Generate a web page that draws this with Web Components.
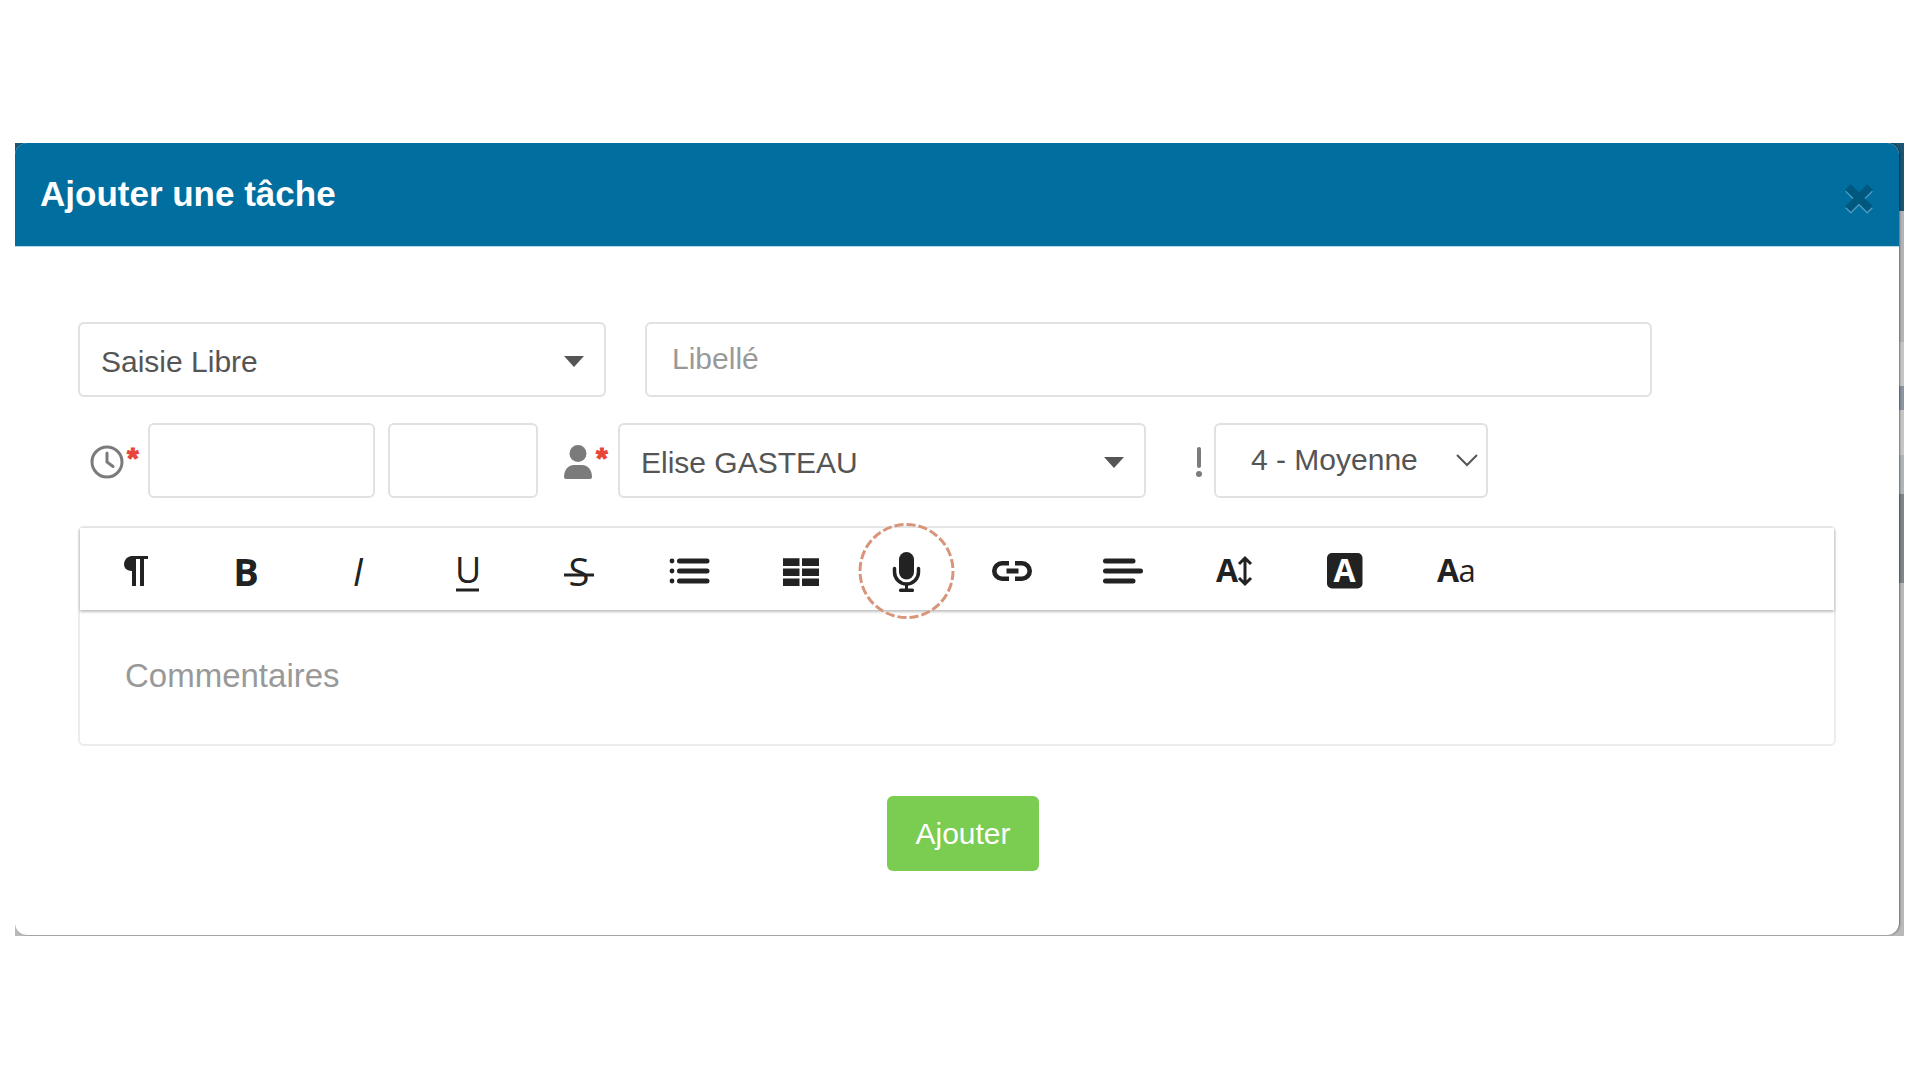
<!DOCTYPE html>
<html lang="fr">
<head>
<meta charset="utf-8">
<meta name="viewport" content="width=device-width, initial-scale=1">
<title>Ajouter une tâche</title>
<style>
    body {
        margin: 0;
        background: #fff;
        color: #555;
        font-family: "Liberation Sans", Arial, sans-serif;
        font-size: 30px;
    }
</style>
</head>
<body>
<task-modal heading="Ajouter une tâche">
    <form-row class="first">
        <select-field label="Type de tâche" value="Saisie Libre" class="third"></select-field>
        <text-field label="Libellé" placeholder="Libellé" class="grow"></text-field>
    </form-row>
    <form-row class="second">
        <field-icon name="clock" required></field-icon>
        <text-field label="Date" class="date"></text-field>
        <text-field label="Heure" class="time"></text-field>
        <field-icon name="user" required class="wide"></field-icon>
        <select-field label="Responsable" value="Elise GASTEAU" class="grow"></select-field>
        <field-icon name="priority" class="narrow"></field-icon>
        <select-field label="Priorité" value="4 - Moyenne" arrow="chevron" class="priority"></select-field>
    </form-row>
    <text-editor placeholder="Commentaires"></text-editor>
    <submit-button slot="footer">Ajouter</submit-button>
</task-modal>

<script>
const ICONS = {
    paragraph: `<path d="M17 5h16v3h-4v27h-4V8h-4v27h-4V20C5 20 8 5 17 5z"/>`,
    bold: `<text x="20" y="35" font-size="38" font-weight="700">B</text>`,
    italic: `<text x="21" y="35" font-size="38" font-style="italic">I</text>`,
    underline: `<text x="20" y="32" font-size="36">U</text><path d="M8 37.500h23v3H8z"/>`,
    strike: `<text x="20" y="35" font-size="38">S</text><path d="M5 22.500h30v3H5z"/>`,
    list: `<g fill="none" stroke="currentColor" stroke-width="5" stroke-linecap="round">
            <path d="M9.500 10H37M9.500 20H37M9.500 30H37"/></g>
            <circle cx="2" cy="10" r="2.400"/><circle cx="2" cy="20" r="2.400"/><circle cx="2" cy="30" r="2.400"/>`,
    table: `<path d="M2 7.300h16.500V15H2zM21 7.300h17V15H21zM2 17.500h16.500v7.600H2zM21 17.500h17v7.600H21zM2 27.500h16.500v7.600H2zM21 27.500h17v7.600H21z"/>`,
    mic: `<circle cx="19.500" cy="20" r="46.500" fill="none" stroke="#d9957a" stroke-width="3" pathLength="288" stroke-dasharray="9 3"/>
            <rect x="12" y="1" width="15" height="27.500" rx="7.500"/>
            <path d="M7.500 17.500v3.500a12 12 0 0 0 24 0v-3.500" fill="none" stroke="currentColor" stroke-width="3.500" stroke-linecap="round"/>
            <path d="M18 33h3v5h-3z"/><rect x="12" y="37.500" width="15" height="3.500" rx="1.500"/>`,
    link: `<path d="M16 12.300H9a7.700 7.700 0 0 0 0 15.400h7M22 12.300h7a7.700 7.700 0 0 1 0 15.400h-7" fill="none" stroke="currentColor" stroke-width="4.600"/>
            <path d="M13.500 17.500h12v5h-12z"/>`,
    align: `<path d="M1.500 10H29M1.500 20H36.500M1.500 30H29" fill="none" stroke="currentColor" stroke-width="5" stroke-linecap="round"/>`,
    size: `<text x="12" y="31" font-size="32" font-weight="700">A</text>
            <path d="M30 7v26M24 13l6-6 6 6M24 27l6 6 6-6" fill="none" stroke="currentColor" stroke-width="3"/>`,
    color: `<rect x="1" y="2" width="35.500" height="35.500" rx="5"/>
            <text x="18.500" y="31" font-size="32" font-weight="700" fill="#fff">A</text>`,
    font: `<text x="11" y="31" font-size="32" font-weight="700">A</text>
            <text x="30" y="31" font-size="31" font-weight="500">a</text>`
};

const TOOLS = [
    ["paragraph", "Format du paragraphe"],
    ["bold", "Gras"],
    ["italic", "Italique"],
    ["underline", "Souligné"],
    ["strike", "Barré"],
    ["list", "Liste"],
    ["table", "Tableau"],
    ["mic", "Dictée"],
    ["link", "Lien"],
    ["align", "Alignement"],
    ["size", "Taille"],
    ["color", "Couleur"],
    ["font", "Police"]
];

class BaseElement extends HTMLElement
{
    constructor(){
        super();
        this.attachShadow({mode:"open"});
    }

    connectedCallback(){
        const template = document.createElement("template");
        template.innerHTML = `<style>* { box-sizing: border-box; }${this.getStyles()}</style>${this.getTemplate()}`;
        this.shadowRoot.replaceChildren(template.content.cloneNode(true));
    }
}

class TaskModal extends BaseElement
{
    getTemplate(){
        return `
        <section class="modal" role="dialog" aria-labelledby="title">
            <header class="modal__header">
                <h1 class="modal__title" id="title">${this.getAttribute("heading")}</h1>
                <button class="modal__close" type="button" aria-label="Fermer">
                    <svg width="30" height="32" viewBox="0 0 30 32" fill="none" stroke-width="8">
                        <path d="M4 6l22 22M26 6L4 28" stroke="#4d9bc0"/>
                        <path d="M4 4l22 22M26 4L4 26" stroke="#00587f"/>
                    </svg>
                </button>
            </header>
            <form class="modal__body">
                <slot></slot>
                <footer class="modal__footer"><slot name="footer"></slot></footer>
            </form>
        </section>
        `;
    }

    getStyles(){
        // the slice of the page behind stays visible along the right edge
        return `
            :host {
                display: block;
                margin: 143px 16px 0 15px;
                padding: 0 5px 1px 0;
                background: linear-gradient(#1b5573 0 68px, #b4b4b7 68px 199px, #c6c6c6 199px 243px,
                    #8b95a3 243px 267px, #c6c6c6 267px 312px, #b0b5b7 312px 351px, #7f8588 351px 440px, #b9b9b9 440px);
            }
            .modal {
                border-radius: 12px;
                background: #fff;
                box-shadow: 1px 0 2px rgba(0, 0, 0, .4);
                clip-path: inset(0 -5px -1px 0);
            }
            .modal__header {
                display: flex;
                justify-content: space-between;
                align-items: flex-start;
                padding: 31px 25px 31px;
                border-bottom: 1px solid #b5dcec;
                border-radius: 12px 12px 0 0;
                background: #006e9f;
            }
            .modal__title {
                margin: 0;
                color: #fff;
                font-size: 35px;
                line-height: 40px;
            }
            .modal__close {
                display: flex;
                padding: 9px 0 0;
                border: 0;
                background: none;
            }
            .modal__body {
                padding: 75px 63px 64px;
            }
            .modal__footer {
                display: flex;
                justify-content: center;
                padding: 50px 0 0 12px;
            }
        `;
    }
}

class FormRow extends BaseElement
{
    getTemplate(){
        return `<slot></slot>`;
    }

    getStyles(){
        return `
            :host {
                display: flex;
                height: 75px;
            }
            :host(.first) {
                gap: 39px;
                margin-bottom: 26px;
                padding-right: 184px;
            }
            :host(.second) {
                margin-bottom: 28px;
                padding-right: 348px;
            }
            ::slotted(.third) { flex: 0 0 528px; }
            ::slotted(.grow) { flex: 1; }
            ::slotted(.date) { flex: 0 0 227px; margin-right: 13px; }
            ::slotted(.time) { flex: 0 0 150px; }
            ::slotted(.priority) { flex: 0 0 274px; }
        `;
    }
}

class TextField extends BaseElement
{
    getTemplate(){
        return `<input type="text" aria-label="${this.getAttribute("label")}" placeholder="${this.getAttribute("placeholder") || ""}">`;
    }

    getStyles(){
        return `
            :host { display: block; min-width: 0; }
            input {
                display: block;
                width: 100%;
                height: 75px;
                padding: 0 25px 2px;
                border: 2px solid #e1e1e1;
                border-radius: 6px;
                background: #fff;
                color: inherit;
                font: inherit;
            }
            input::placeholder { color: #999; opacity: 1; }
        `;
    }
}

class SelectField extends BaseElement
{
    getTemplate(){
        const chevron = this.getAttribute("arrow") === "chevron";
        return `
        <select class="${chevron ? "chevron" : "caret"}" aria-label="${this.getAttribute("label")}">
            <option>${this.getAttribute("value")}</option>
        </select>
        ${chevron
            ? `<svg class="arrow arrow--chevron" width="22" height="14" viewBox="0 0 22 14"><path d="M1 1l10 10L21 1" fill="none" stroke="#555" stroke-width="2"/></svg>`
            : `<svg class="arrow" width="20" height="11" viewBox="0 0 20 11"><path d="M0 0h20L10 11z" fill="#555"/></svg>`}
        `;
    }

    getStyles(){
        return `
            :host {
                display: grid;
                align-items: center;
                min-width: 0;
            }
            select, .arrow { grid-area: 1 / 1; }
            select {
                appearance: none;
                width: 100%;
                height: 75px;
                padding: 3px 50px 0 21px;
                border: 2px solid #e1e1e1;
                border-radius: 6px;
                background: #fff;
                color: inherit;
                font: inherit;
            }
            select.chevron { padding: 0 30px 2px 35px; }
            .arrow {
                justify-self: end;
                margin: 4px 22px 0 0;
                pointer-events: none;
            }
            .arrow--chevron { margin: 0 10px 0 0; }
        `;
    }
}

class FieldIcon extends BaseElement
{
    getTemplate(){
        const shapes = {
            clock: `<svg width="34" height="34" viewBox="0 0 34 34" fill="none" stroke="currentColor" stroke-width="3" stroke-linecap="round">
                    <circle cx="17" cy="17" r="15"/><path d="M17 8v9l6 4.500"/></svg>`,
            user: `<svg width="30" height="34" viewBox="0 0 30 34" fill="currentColor">
                    <circle cx="15" cy="8.500" r="8.500"/><path d="M1 32c0-8 5-12 10-12h8c5 0 10 4 10 12q0 2-2 2H3q-2 0-2-2z"/></svg>`,
            priority: `<svg width="6" height="30" viewBox="0 0 6 30" fill="currentColor">
                    <rect x="1" y="0" width="4" height="21" rx="2"/><circle cx="3" cy="27" r="3"/></svg>`
        };
        return `${shapes[this.getAttribute("name")]}${this.hasAttribute("required") ? "<span>*</span>" : ""}`;
    }

    getStyles(){
        return `
            :host {
                display: flex;
                flex: 0 0 70px;
                align-items: center;
                padding: 2px 0 0 12px;
                box-sizing: border-box;
                color: #7b7b7b;
            }
            :host(.wide) { flex-basis: 80px; padding-left: 25px; }
            :host(.narrow) { flex-basis: 68px; padding-left: 50px; }
            svg { flex: none; }
            span {
                padding: 0 0 8px 3px;
                color: #e8453a;
                font-weight: bold;
                line-height: 34px;
                -webkit-text-stroke: 1px #e8453a;
            }
        `;
    }
}

class ToolButton extends BaseElement
{
    getTemplate(){
        return `
        <button type="button" aria-label="${this.getAttribute("label")}">
            <svg width="41" height="40" viewBox="0 0 41 40" fill="currentColor" text-anchor="middle">${ICONS[this.getAttribute("icon")]}</svg>
        </button>
        `;
    }

    getStyles(){
        return `
            :host { display: block; flex: 0 0 111px; }
            :host([icon="mic"]) { flex-basis: 101px; }
            button {
                display: flex;
                justify-content: center;
                width: 100%;
                padding: 0;
                border: 0;
                background: none;
                color: #222;
                font-family: "Open Sans", "Noto Sans", sans-serif;
            }
            svg { overflow: visible; }
        `;
    }
}

class TextEditor extends BaseElement
{
    getTemplate(){
        return `
        <div class="toolbar" role="toolbar" aria-label="Mise en forme">
            ${TOOLS.map(([icon, label]) => `<tool-button icon="${icon}" label="${label}"></tool-button>`).join("")}
        </div>
        <textarea aria-label="${this.getAttribute("placeholder")}" placeholder="${this.getAttribute("placeholder")}"></textarea>
        `;
    }

    getStyles(){
        return `
            :host {
                display: block;
                border: 2px solid #ececec;
                border-radius: 6px;
            }
            .toolbar {
                display: flex;
                align-items: center;
                position: relative;
                height: 82px;
                padding-top: 4px;
                background: #fff;
                box-shadow: 0 2px 2px rgba(0, 0, 0, .16), 0 1px 4px rgba(0, 0, 0, .14);
            }
            textarea {
                display: block;
                width: 100%;
                height: 134px;
                padding: 46px 45px 0;
                border: 0;
                border-radius: 6px;
                background: none;
                color: inherit;
                font-family: inherit;
                font-size: 33px;
                line-height: 40px;
                resize: none;
            }
            textarea::placeholder { color: #999; opacity: 1; }
        `;
    }
}

class SubmitButton extends BaseElement
{
    getTemplate(){
        return `<button type="submit"><slot></slot></button>`;
    }

    getStyles(){
        return `
            :host { display: block; }
            button {
                height: 75px;
                padding: 0 28px;
                border: 0;
                border-radius: 6px;
                background: #7acd51;
                color: #fff;
                font: inherit;
            }
        `;
    }
}

customElements.define('task-modal',TaskModal);
customElements.define('form-row',FormRow);
customElements.define('text-field',TextField);
customElements.define('select-field',SelectField);
customElements.define('field-icon',FieldIcon);
customElements.define('tool-button',ToolButton);
customElements.define('text-editor',TextEditor);
customElements.define('submit-button',SubmitButton);
</script>
</body>
</html>
